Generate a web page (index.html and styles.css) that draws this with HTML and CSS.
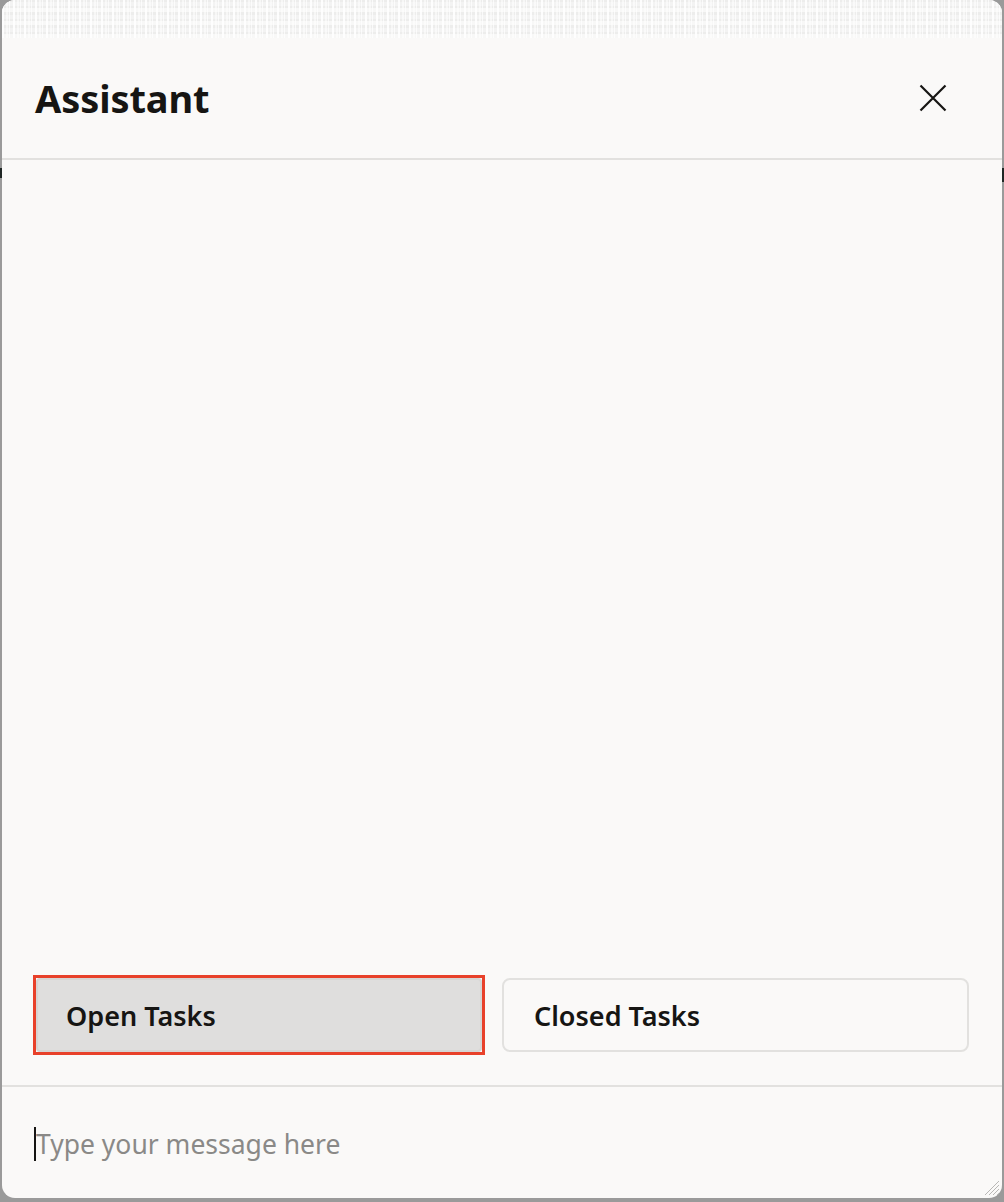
FILE: index.html
```html
<!DOCTYPE html>
<html lang="en">
<head>
<meta charset="utf-8">
<title>Assistant</title>
<link rel="stylesheet" href="styles.css">
</head>
<body>
<div class="frame">
  <section class="panel">
    <div class="texture"></div>
    <header class="header">
      <h1 class="title">Assistant</h1>
      <button class="close" aria-label="Close">
        <svg width="28" height="28" viewBox="0 0 28 28" fill="none" stroke="#161513" stroke-width="2.2">
          <path d="M1.5 1.5 L26.5 26.5 M26.5 1.5 L1.5 26.5"/>
        </svg>
      </button>
    </header>
    <div class="conversation">
      <div class="actions">
        <button class="action action-active">Open Tasks</button>
        <button class="action">Closed Tasks</button>
      </div>
    </div>
    <footer class="composer">
      <span class="caret"></span><span class="placeholder">Type your message here</span>
      <svg class="grip" width="18" height="18" viewBox="0 0 18 18" stroke="#b8b7b5" stroke-width="1">
        <path d="M17 3 L3 17 M17 7 L7 17 M17 11 L11 17 M17 15 L15 17"/>
      </svg>
    </footer>
  </section>
</div>
</body>
</html>
```
FILE: styles.css
```css
html, body {
  margin: 0;
  padding: 0;
}
body {
  width: 1004px;
  height: 1202px;
  background: #9a9a9a;
  font-family: "Noto Sans", "Open Sans", sans-serif;
  overflow: hidden;
}
.frame {
  height: 1202px;
  padding: 0 2px 4px 2px;
  box-sizing: border-box;
  background:
    linear-gradient(#1f2624, #1f2624) 0 168px / 2px 10px no-repeat,
    linear-gradient(#1f2624, #1f2624) 1002px 168px / 2px 14px no-repeat,
    #9a9a9a;
}
.panel {
  height: 1198px;
  background: #faf9f8;
  border-radius: 13px;
  overflow: hidden;
  display: flex;
  flex-direction: column;
}
.texture {
  height: 38px;
  flex: none;
  background-color: #ededec;
  background-image:
    repeating-linear-gradient(90deg, rgba(255,255,255,0.9) 0 2px, transparent 2px 4px, rgba(255,255,255,0.55) 4px 6px, transparent 6px 7px, rgba(255,255,255,0.75) 7px 8px, transparent 8px 11px),
    repeating-linear-gradient(0deg, rgba(255,255,255,0.6) 0 4px, transparent 4px 6px, rgba(255,255,255,0.35) 6px 10px, transparent 10px 13px);
}
.header {
  height: 120px;
  flex: none;
  border-bottom: 2px solid #e2e1df;
  display: flex;
  align-items: center;
  justify-content: space-between;
  padding: 0 55px 0 33px;
}
.title {
  margin: 0;
  font-size: 38px;
  font-weight: 700;
  color: #161513;
  letter-spacing: -0.1px;
}
.close {
  background: none;
  border: 0;
  padding: 0;
  width: 28px;
  height: 28px;
  display: flex;
  margin-top: 0;
}
.conversation {
  flex: 1;
  display: flex;
  flex-direction: column;
  justify-content: flex-end;
  padding: 0 33px 33px 34px;
}
.actions {
  display: grid;
  grid-template-columns: 446px 467px;
  gap: 20px;
}
.action {
  position: relative;
  height: 74px;
  box-sizing: border-box;
  border: 2px solid #e2e1df;
  border-radius: 8px;
  background: #faf9f8;
  font-family: "Noto Sans", "Open Sans", sans-serif;
  font-size: 27px;
  font-weight: 600;
  color: #161513;
  text-align: left;
  padding: 0 0 0 30px;
}
.action-active {
  background: #dfdedd;
  border-color: #d6d5d3;
  border-radius: 4px;
  padding-left: 28px;
}
.action-active::after {
  content: "";
  position: absolute;
  inset: -5px;
  border: 3px solid #e8412a;
}
.composer {
  height: 111px;
  flex: none;
  border-top: 2px solid #e2e1df;
  display: flex;
  align-items: center;
  padding: 0 0 0 32px;
  position: relative;
}
.caret {
  width: 2px;
  height: 34px;
  background: #161513;
  margin-top: 2px;
}
.placeholder {
  font-size: 26.5px;
  color: #8a8987;
  margin-top: 2px;
}
.grip {
  position: absolute;
  right: 2px;
  bottom: 2px;
}
```
